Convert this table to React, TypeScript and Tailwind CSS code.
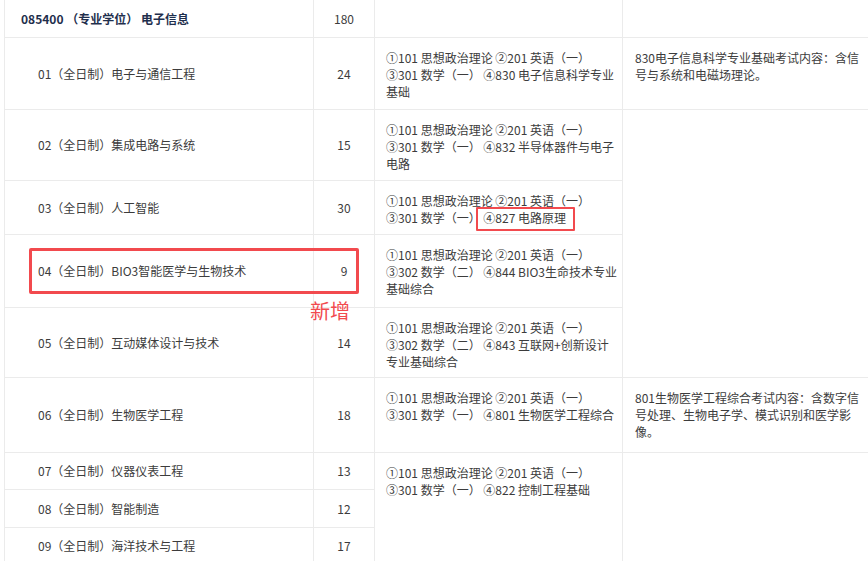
const font = "font-['Microsoft_YaHei','Noto_Sans_CJK_SC','Noto_Sans',sans-serif]"

type Row = {
  name: string
  count: string
  h: number
  exam?: string[]
  examSpan?: number
  note?: string[]
  noteSpan?: number
}

const rows: Row[] = [
  {
    name: '01（全日制）电子与通信工程',
    count: '24',
    h: 72,
    exam: ['①101 思想政治理论 ②201 英语（一）', '③301 数学（一） ④830 电子信息科学专业', '基础'],
    note: ['830电子信息科学专业基础考试内容：含信', '号与系统和电磁场理论。'],
  },
  {
    name: '02（全日制）集成电路与系统',
    count: '15',
    h: 71,
    exam: ['①101 思想政治理论 ②201 英语（一）', '③301 数学（一） ④832 半导体器件与电子', '电路'],
    note: [],
    noteSpan: 4,
  },
  {
    name: '03（全日制）人工智能',
    count: '30',
    h: 54,
    exam: ['①101 思想政治理论 ②201 英语（一）', '③301 数学（一） ④827 电路原理'],
  },
  {
    name: '04（全日制）BIO3智能医学与生物技术',
    count: '9',
    h: 73,
    exam: ['①101 思想政治理论 ②201 英语（一）', '③302 数学（二） ④844 BIO3生命技术专业', '基础综合'],
  },
  {
    name: '05（全日制）互动媒体设计与技术',
    count: '14',
    h: 70,
    exam: ['①101 思想政治理论 ②201 英语（一）', '③302 数学（二） ④843 互联网+创新设计', '专业基础综合'],
  },
  {
    name: '06（全日制）生物医学工程',
    count: '18',
    h: 75,
    exam: ['①101 思想政治理论 ②201 英语（一）', '③301 数学（一） ④801 生物医学工程综合'],
    note: ['801生物医学工程综合考试内容：含数字信', '号处理、生物电子学、模式识别和医学影', '像。'],
  },
  {
    name: '07（全日制）仪器仪表工程',
    count: '13',
    h: 37,
    exam: ['①101 思想政治理论 ②201 英语（一）', '③301 数学（一） ④822 控制工程基础'],
    examSpan: 3,
    note: [],
    noteSpan: 3,
  },
  { name: '08（全日制）智能制造', count: '12', h: 38 },
  { name: '09（全日制）海洋技术与工程', count: '17', h: 37 },
]

export default function App() {
  return (
    <div className={`relative h-[561px] w-[868px] overflow-hidden bg-white pl-[4px] text-[12px] leading-[17px] text-[#3c3c3c] ${font}`}>
      <table className="w-[880px] table-fixed border-collapse">
        <colgroup>
          <col className="w-[309px]" />
          <col className="w-[61px]" />
          <col className="w-[248px]" />
          <col className="w-[262px]" />
        </colgroup>
        <tbody>
          <tr>
            <td className="h-[37px] border border-t-0 border-[#ebebeb] pl-4 align-middle text-[12px] font-bold text-[#1f2f4d]">
              085400 （专业学位） 电子信息
            </td>
            <td className="border border-t-0 border-[#ebebeb] text-center align-middle">180</td>
            <td className="border border-t-0 border-[#ebebeb]"></td>
            <td className="border border-t-0 border-[#ebebeb]"></td>
          </tr>
          {rows.map((r) => (
            <tr key={r.name}>
              <td
                className="border border-[#ebebeb] pl-[33px] align-middle"
                style={{ height: r.h }}
              >
                {r.name}
              </td>
              <td className="border border-[#ebebeb] text-center align-middle">{r.count}</td>
              {r.exam && (
                <td rowSpan={r.examSpan ?? 1} className="border border-[#ebebeb] px-[11px] pt-[11px] align-top">
                  {r.exam.map((l) => (
                    <div key={l} className="whitespace-nowrap">{l}</div>
                  ))}
                </td>
              )}
              {r.note && (
                <td rowSpan={r.noteSpan ?? 1} className="border border-[#ebebeb] px-[12px] pt-[11px] align-top">
                  {r.note.map((l) => (
                    <div key={l} className="whitespace-nowrap">{l}</div>
                  ))}
                </td>
              )}
            </tr>
          ))}
        </tbody>
      </table>

      {/* annotations */}
      <div className="absolute left-[29px] top-[248px] h-[46px] w-[330px] rounded-[2px] border-[3px] border-[#f24a4e]" />
      <div className="absolute left-[476px] top-[207px] h-[24px] w-[99px] rounded-[1px] border-[2.5px] border-[#f24a4e]" />
      <div className="absolute left-[310px] top-[298px] text-[20px] leading-[26px] text-[#f24a4e]">新增</div>
    </div>
  )
}
